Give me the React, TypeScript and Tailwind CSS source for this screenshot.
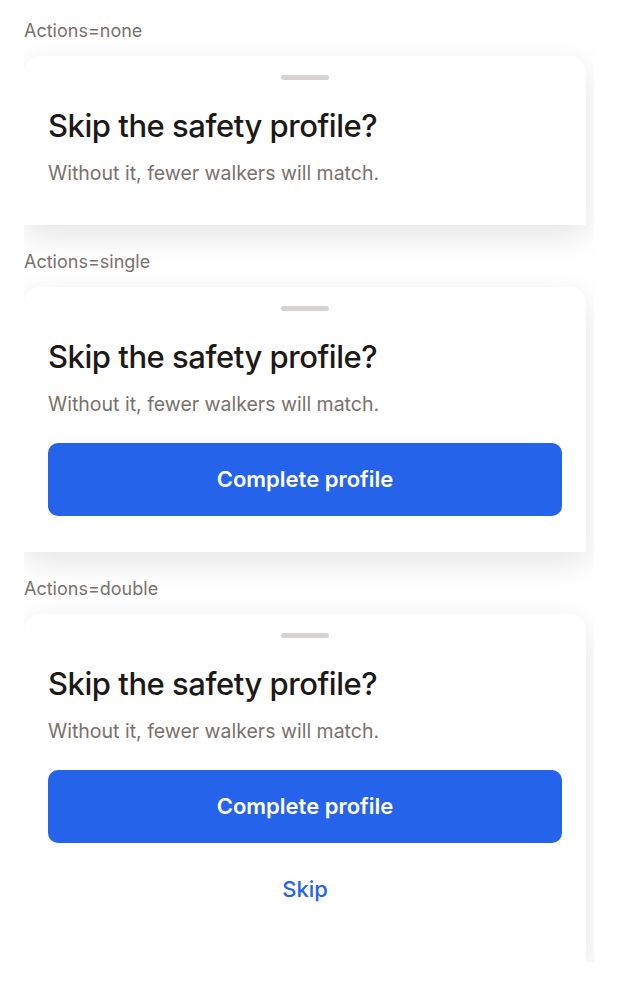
import React from "react";

function Handle() {
  return <div className="mx-auto h-[5px] w-12 rounded-full bg-[#d6d3d1]" />;
}

function Sheet({ actions }: { actions: "none" | "single" | "double" }) {
  return (
    <div
      className={`mr-2 rounded-t-2xl bg-white px-6 pt-[19px] shadow-[0_10px_32px_rgba(0,0,0,0.11)] ${
        actions === "none" ? "pb-[38px]" : "pb-9"
      }`}
    >
      <Handle />
      <h2 className="mt-[27px] text-[31px] leading-[38px] font-medium tracking-[-0.015em] text-[#1c1917]">
        Skip the safety profile?
      </h2>
      <p className="mt-[14px] text-[19.5px] leading-[28px] text-[#78716c]">
        Without it, fewer walkers will match.
      </p>
      {actions !== "none" && (
        <div className="mt-[25px] flex flex-col gap-[10px]">
          <button className="flex h-[73px] w-full items-center justify-center rounded-[10px] bg-[#2563eb] text-[22px] font-semibold text-white">
            Complete profile
          </button>
          {actions === "double" && (
            <button className="flex h-[73px] w-full items-center justify-center text-[22px] font-medium text-[#2563eb]">
              Skip
            </button>
          )}
        </div>
      )}
    </div>
  );
}

function Section({ actions }: { actions: "none" | "single" | "double" }) {
  return (
    <div className="flex flex-col gap-[13px]">
      <div className="text-[18px] leading-6 text-[#78716c]">Actions={actions}</div>
      <Sheet actions={actions} />
    </div>
  );
}

export default function App() {
  return (
    <div className="min-h-screen bg-white font-['Inter',sans-serif]">
      <div className="ml-6 flex w-[570px] flex-col gap-[25px] overflow-hidden pt-[19px]">
        <Section actions="none" />
        <Section actions="single" />
        <Section actions="double" />
      </div>
    </div>
  );
}
